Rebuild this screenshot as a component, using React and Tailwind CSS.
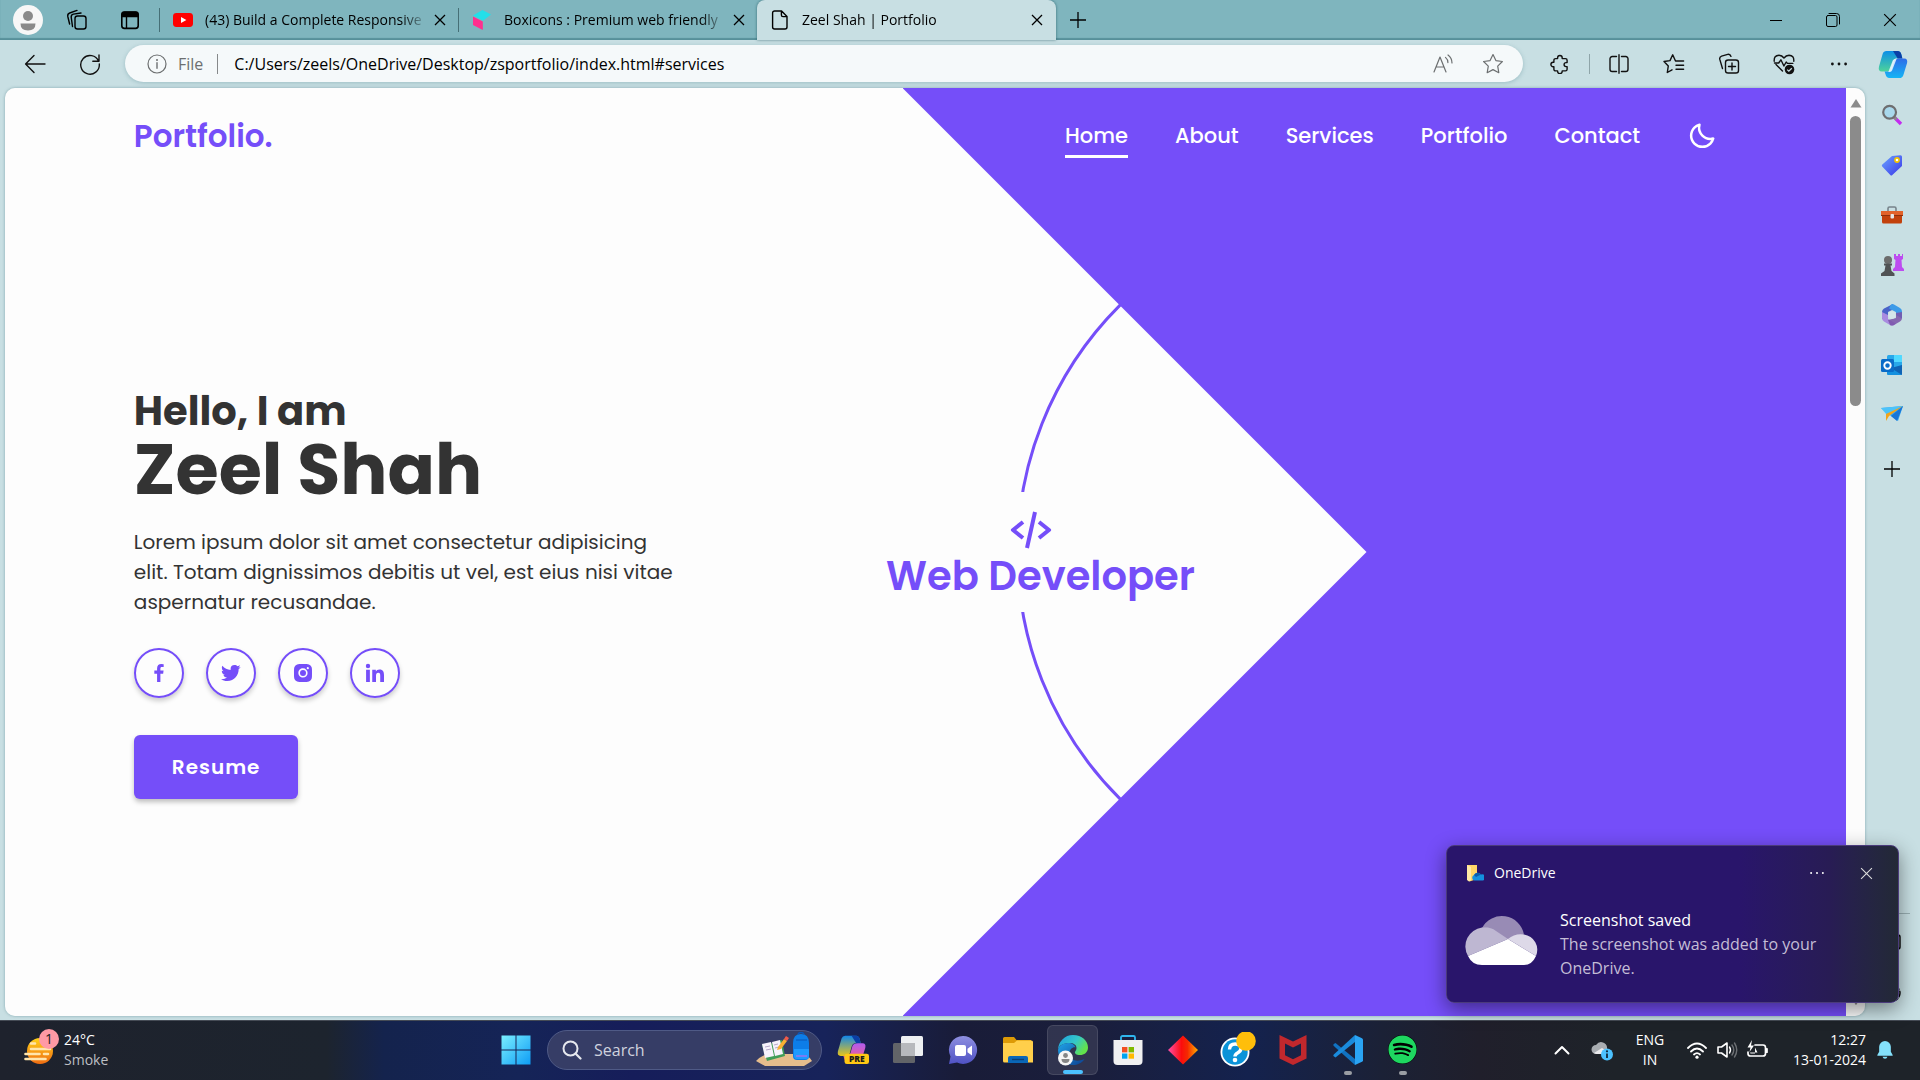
import React from "react";
import {
  BiCodeAlt,
  BiLogoFacebook,
  BiLogoInstagramAlt,
  BiLogoLinkedin,
  BiLogoTwitter,
  BiMoon,
} from "react-icons/bi";
import { FaSpotify } from "react-icons/fa";

const stroke = { fill: "none", stroke: "currentColor", strokeWidth: 1.4, strokeLinecap: "round", strokeLinejoin: "round" };

function Svg({ size = 20, box = "0 0 20 20", children, ...rest }) {
  return (
    <svg width={size} height={size} viewBox={box} aria-hidden="true" className="shrink-0" {...rest}>
      {children}
    </svg>
  );
}

/* ---------- line icons ---------- */

const CloseIcon = ({ size = 12, width = 1.3 }) => (
  <Svg size={size} box="0 0 12 12"><path d="M1 1l10 10M11 1L1 11" stroke="currentColor" strokeWidth={width} fill="none" /></Svg>
);
const PlusIcon = () => (
  <Svg size={18} box="0 0 18 18"><path d="M9 1v16M1 9h16" stroke="currentColor" strokeWidth="1.3" /></Svg>
);
const WorkspacesIcon = () => (
  <Svg size={22} box="0 0 22 22">
    <g {...stroke}>
      <rect x="9" y="7" width="11" height="13" rx="2.5" />
      <path d="M6.5 17.5L5.2 8.2Q5 5.6 7.4 5.1L15 4" />
      <path d="M3.6 15L1.8 7.5Q1.3 4.8 3.7 4L11 1.4" />
    </g>
  </Svg>
);
const TabActionsIcon = () => (
  <Svg size={20}>
    <rect x="1.8" y="2" width="16.4" height="16.4" rx="2.6" {...stroke} strokeWidth="1.6" />
    <path d="M1.5 7.2V4.6A3 3 0 014.5 1.6h11a3 3 0 013 3v2.6z" fill="currentColor" />
    <path d="M6.5 7v11" {...stroke} />
  </Svg>
);
const YoutubeIcon = () => (
  <Svg size={20}><rect y="3" width="20" height="14" rx="3.4" fill="#f00" /><path d="M8 7l5.4 3L8 13z" fill="#fff" /></Svg>
);
const BoxiconsIcon = () => (
  <Svg size={20}>
    <path d="M1 5.4L10.5 0 19 4.6l-8 6.2z" fill="#23dfe9" />
    <path d="M1 6.4l9.8 5V20L1 15z" fill="#ff2f8e" />
  </Svg>
);
const PageIcon = () => (
  <Svg size={20}>
    <path d="M4.6 1h7L17 6.4V17a2 2 0 01-2 2H4.6a2 2 0 01-2-2V3a2 2 0 012-2zM11.4 1.3V5a1.6 1.6 0 001.6 1.6h3.8" {...stroke} />
  </Svg>
);
const BackIcon = () => (
  <Svg size={22} box="0 0 22 22"><path d="M21 11H2M10 2.5L1.6 11l8.4 8.5" {...stroke} /></Svg>
);
const RefreshIcon = () => (
  <Svg size={22} box="0 0 22 22"><path d="M19.6 8.2A9.3 9.3 0 1020.3 11M20 2v6.2h-6.2" {...stroke} /></Svg>
);
const InfoIcon = () => (
  <Svg size={20}><circle cx="10" cy="10" r="9" {...stroke} strokeWidth="1.2" /><path d="M10 8.8v5.4" {...stroke} /><circle cx="10" cy="6" r="1" fill="currentColor" /></Svg>
);
const ReadAloudIcon = () => (
  <Svg size={20}><path d="M1 18L7 3l6 15M3 13h8M12.5 3.4q2.4 2 2.4 5.2M15 1q4 3 4 8" {...stroke} strokeWidth="1.2" /></Svg>
);
const StarIcon = () => (
  <Svg size={22} box="0 0 22 22"><path d="M11 1.6l2.9 6 6.5.9-4.7 4.6 1.1 6.6L11 16.6l-5.8 3.1 1.1-6.6L1.6 8.5l6.5-.9z" {...stroke} strokeWidth="1.2" /></Svg>
);
const PuzzleIcon = () => (
  <Svg size={20}>
    <path d="M5.600 4.600h2V3.800a2.300 2.300 0 014.600 0v.8h3.200a1.700 1.700 0 011.700 1.700v2.300h-1a2 2 0 000 4h1v2.600a1.700 1.700 0 01-1.700 1.700h-3.200v.4a2.300 2.300 0 01-4.600 0v-.4h-2a1.700 1.700 0 01-1.700-1.700v-2.500h-.8a2.200 2.200 0 010-4.400h.8V6.300a1.700 1.700 0 011.700-1.700z" {...stroke} />
  </Svg>
);
const SplitIcon = () => (
  <Svg size={20}><path d="M7.5 2.5H3.2A2.2 2.2 0 001 4.7v10.6a2.2 2.2 0 002.2 2.2h4.3M12.5 2.5h4.3A2.2 2.2 0 0119 4.7v10.6a2.2 2.2 0 01-2.2 2.2h-4.3M10 .8v18.4" {...stroke} /></Svg>
);
const FavoritesIcon = () => (
  <Svg size={22} box="0 0 22 22">
    <path d="M12.5 8L9.7 1.8 7 7.6l-6 .9 4.3 4.4-1 6.6L9 16.8M13 8h7.6M13 12.2h7.6M13 16.2h7.6" {...stroke} />
  </Svg>
);
const CollectionsIcon = () => (
  <Svg size={22} box="0 0 22 22">
    <rect x="7.5" y="7" width="13" height="13" rx="2.6" {...stroke} />
    <path d="M14 10v7M10.5 13.5h7M4.5 15.5L1.8 6.4Q1.2 3.9 3.6 3.1L9.7 1.4q2.4-.6 3.3 2" {...stroke} />
  </Svg>
);
const HeartIcon = () => (
  <Svg size={22} box="0 0 22 22">
    <path d="M9.5 18L3 11.5M1.2 8.2Q.8 2.4 6 2.2 9 2.2 11 5q2-2.8 5-2.8 5.2.2 4.8 6M1.5 10h4.2l2.2-3.2 3 6.2 2.3-4 1.2 1.4h5.4" {...stroke} />
    <circle cx="16.5" cy="16.5" r="4.8" fill="currentColor" />
    <path d="M14.2 16.6l1.6 1.6 3-3" stroke="#c8dfe3" strokeWidth="1.3" fill="none" />
  </Svg>
);
const DotsIcon = ({ size = 18, r = 1.4 }) => (
  <Svg size={size} box="0 0 18 18"><circle cx="2.4" cy="9" r={r} fill="currentColor" /><circle cx="9" cy="9" r={r} fill="currentColor" /><circle cx="15.6" cy="9" r={r} fill="currentColor" /></Svg>
);

/* ---------- colour icons ---------- */

const CopilotShape = ({ a, b, c, d, id }) => (
  <>
    <defs>
      <linearGradient id={`${id}a`} x1="0" y1="0" x2="0" y2="1"><stop offset="0" stopColor={a} /><stop offset="1" stopColor={b} /></linearGradient>
      <linearGradient id={`${id}b`} x1="0" y1="0" x2="0" y2="1"><stop offset="0" stopColor={c} /><stop offset="1" stopColor={d} /></linearGradient>
    </defs>
    <path d="M9 2h12q3 0 4 4l1 4h-6q-3 0-4 4l-2 7q-1 3-4 3H4q-4 0-3-5L5 5q1-3 4-3z" fill={`url(#${id}a)`} />
    <path d="M16 2h5q3 0 4 4l1 4h-5z" fill="#0b3fa6" />
    <path d="M23 10h5q4 0 3 5l-4 13q-1 3-4 3H12q-3 0-4-4l-1-3h4q3 0 4-4l2-7q1-3 6-3z" fill={`url(#${id}b)`} />
  </>
);
const CopilotIcon = () => (
  <Svg size={30} box="0 0 32 32">
    <CopilotShape id="cp" a="#0c8ee8" b="#4ed39a" c="#2f6be8" d="#16b5f5" />
    <path d="M20 10l-5 13q-1 2-4 1.500l4-10.500q1-4 5-4z" fill="#eef8ff" opacity=".85" />
  </Svg>
);
const SearchColorIcon = () => (
  <Svg size={22} box="0 0 22 22">
    <path d="M13 13l7 7" stroke="#c32cf0" strokeWidth="3.4" />
    <path d="M13 13l2.5 2.5" stroke="#8a8a8a" strokeWidth="3" />
    <circle cx="8.6" cy="8.2" r="6.4" fill="#a9d8ec" stroke="#6e6e70" strokeWidth="2.2" />
  </Svg>
);
const TagIcon = () => (
  <Svg size={22} box="0 0 22 22">
    <defs><linearGradient id="tag" x1="0" y1="0" x2="1" y2="1"><stop offset="0" stopColor="#6ba5ff" /><stop offset="1" stopColor="#3a35e8" /></linearGradient></defs>
    <path d="M11 2l8.5-.8q1.5 0 1.5 1.5L21 12 11.3 21q-1 1-2 0L1.2 12.6q-.9-1 .1-2z" fill="url(#tag)" />
    <circle cx="16" cy="6" r="2.1" fill="#fff" stroke="#f5c400" strokeWidth="1.6" />
  </Svg>
);
const ToolboxIcon = () => (
  <Svg size={24} box="0 0 24 24">
    <path d="M8 8V5.5Q8 4 9.500 4h5Q16 4 16 5.500V8" fill="none" stroke="#77838a" strokeWidth="1.6" />
    <path d="M1 8h22v5H1z" fill="#e2622a" /><path d="M2 13h20v6a1.500 1.500 0 01-1.500 1.500h-17A1.500 1.500 0 012 19z" fill="#c2410c" />
    <path d="M1 12.500h22" stroke="#8f2f0a" strokeWidth="1" /><rect x="10.500" y="11" width="3.500" height="4.500" rx="1" fill="#e6e6e6" />
  </Svg>
);
const ChessIcon = () => (
  <Svg size={24} box="0 0 24 24">
    <path d="M14 1h2v2h2V1h2v2h2V1h1v5l-1.500 1 .5 7 2 2v2H13v-2l2-2 .5-7L14 6z" fill="#bd4cf0" />
    <circle cx="8" cy="7" r="4" fill="#6c6c6c" /><path d="M4 10.500h8v2h-1.500l1 5.500 3 2.500V23H1v-2.500L4.500 18l1-5.500H4z" fill="#505254" />
  </Svg>
);
const M365Icon = () => (
  <Svg size={22} box="0 0 22 22">
    <path d="M12 0L3 4.500Q1 5.500 1 8v7l6-3V8l6-3z" fill="#4a63c8" />
    <path d="M10 .5q1.500-.8 3 0l6 3.500q2 1 2 3.500v7l-6-3.500V8L8 4.500z" fill="#3d9be8" />
    <path d="M1 8v6q0 2.500 2 3.500l6 3.500q2 1 4 0l2-1.200-8-4.800V11z" fill="#a98be0" />
    <path d="M21 8v6q0 2.500-2 3.500L13 21q-2 1-4 0l-2-5 8-2V9z" fill="#7a52a8" opacity=".85" />
    <circle cx="11" cy="11" r="3.800" fill="#d5e5ea" />
  </Svg>
);
const OutlookIcon = () => (
  <Svg size={22} box="0 0 22 22">
    <rect x="6" y="1" width="15" height="19" rx="1.500" fill="#28a8ea" /><path d="M13 1h7a1 1 0 011 1v6h-8z" fill="#50d9ff" />
    <path d="M6 12l8 4 7-5v9a1 1 0 01-1 1H7a1 1 0 01-1-1z" fill="#1490df" /><path d="M21 11v10L10 14z" fill="#0f63b5" />
    <rect x="0" y="5" width="13" height="13" rx="1.500" fill="#0a6cc8" /><circle cx="6.500" cy="11.500" r="3.200" fill="none" stroke="#fff" strokeWidth="1.900" />
  </Svg>
);
const SendIcon = () => (
  <Svg size={22} box="0 0 22 22">
    <path d="M0 4l22-2-5 15-7-5z" fill="#35a8f3" /><path d="M0 4l22-2L6 11z" fill="#4cc3fa" />
    <path d="M22 2L5 10v7l3-5z" fill="#f3a41a" /><path d="M10 12l12-10-6 15z" fill="#1976d8" />
  </Svg>
);
const WindowsIcon = () => (
  <Svg size={30} box="0 0 30 30">
    <defs><linearGradient id="win" gradientUnits="userSpaceOnUse" x1="0" y1="0" x2="30" y2="30"><stop offset="0" stopColor="#7cf0ff" /><stop offset="1" stopColor="#0c9bf5" /></linearGradient></defs>
    <path d="M.5.500h14v14H.5zM15.500.500h14v14h-14zM.5 15.500h14v14H.5zM15.500 15.500h14v14h-14z" fill="url(#win)" />
  </Svg>
);
const CopilotPreIcon = () => (
  <Svg size={32} box="0 0 34 34">
    <g transform="scale(.97)"><CopilotShape id="pre" a="#1286e8" b="#e8c51a" c="#b05cf0" d="#ff5f7e" /></g>
    <rect x="8" y="21" width="26" height="11" rx="2.500" fill="#ffc814" />
    <text x="21" y="29.700" textAnchor="middle" fontSize="9" fontWeight="800" fontFamily="Open Sans, sans-serif" fill="#1b1b1b">PRE</text>
  </Svg>
);
const TaskViewIcon = () => (
  <Svg size={30} box="0 0 30 30">
    <rect x="0" y="8" width="22" height="20" rx="1.500" fill="#626468" /><rect x="8" y="1" width="22" height="20" rx="1.500" fill="#eef0f2" /><path d="M8 8h14v13H8z" fill="#b7b9bd" />
  </Svg>
);
const ChatIcon = () => (
  <Svg size={30} box="0 0 30 30">
    <defs><linearGradient id="chat" x1="0" y1="0" x2="0" y2="1"><stop offset="0" stopColor="#8e8fe0" /><stop offset="1" stopColor="#4f52c4" /></linearGradient></defs>
    <path d="M15 1a14 14 0 11-6 26.600L1 29l1.500-7.500A14 14 0 0115 1z" fill="url(#chat)" />
    <rect x="7" y="10" width="11" height="11" rx="2" fill="#fff" /><path d="M19.500 13.800L24 10.500v10l-4.500-3.300z" fill="#fff" />
  </Svg>
);
const FolderIcon = () => (
  <Svg size={30} box="0 0 30 30">
    <path d="M0 3.500A1.500 1.500 0 011.500 2H11l2.500 3H28v6H0z" fill="#dd9a06" />
    <path d="M0 8h11l3-2.500h14.500A1.500 1.500 0 0130 7v20.500H1.500A1.500 1.500 0 010 26z" fill="#ffcf4b" />
    <path d="M5 28v-5a2 2 0 012-2h16a2 2 0 012 2v5z" fill="#0a67b8" /><path d="M9 24.500h12" stroke="#0c3f73" strokeWidth="1.400" />
  </Svg>
);
const EdgeIcon = () => (
  <Svg size={32} box="0 0 32 32">
    <defs>
      <linearGradient id="edA" x1="0" y1="0" x2="1" y2=".5"><stop offset="0" stopColor="#1c9de0" /><stop offset=".6" stopColor="#35c8c8" /><stop offset="1" stopColor="#63e24b" /></linearGradient>
      <linearGradient id="edB" x1="0" y1="0" x2="1" y2="1"><stop offset="0" stopColor="#1fa3e8" /><stop offset="1" stopColor="#0d3f8f" /></linearGradient>
    </defs>
    <path d="M1 16A15 15 0 0116 1c9 0 15 6 15 12.500 0 5-4 7.500-8 7.500-4 0-5.500-1.500-5-3 .6-1.600 1.500-2 1.500-4C19.500 11 17 9 12 9 7 9 2 11 1 16z" fill="url(#edA)" />
    <path d="M1 16c1-4 5-7 10-7 4 0 7 2 7.500 4.500-2.500-.7-6 1.500-6 6 0 6 6.500 9.500 15 5.500C25 29 20.500 31 16 31 8 31 1 24 1 16z" fill="url(#edB)" />
    <circle cx="8.500" cy="24" r="7.500" fill="#f5f5f5" /><circle cx="8.500" cy="21.500" r="2.400" fill="#858585" /><path d="M4.500 25h8q0 4-4 4t-4-4z" fill="#858585" />
  </Svg>
);
const StoreIcon = () => (
  <Svg size={30} box="0 0 30 30">
    <path d="M8 7V2.500A1.500 1.500 0 019.500 1h11A1.500 1.500 0 0122 2.500V7" fill="none" stroke="#2fb6ef" strokeWidth="1.800" />
    <path d="M.5 5h29v21a4 4 0 01-4 4h-21a4 4 0 01-4-4z" fill="#f0f0f1" />
    <path d="M9 12h5.400v5.400H9z" fill="#f25022" /><path d="M15.600 12H21v5.400h-5.400z" fill="#7fba00" /><path d="M9 18.500h5.400v5.200H9z" fill="#00a4ef" /><path d="M15.600 18.500H21v5.200h-5.400z" fill="#ffb900" />
  </Svg>
);
const DiamondIcon = () => (
  <Svg size={30} box="0 0 30 30">
    <defs><linearGradient id="dia"><stop offset="0" stopColor="#ff4fa8" /><stop offset=".45" stopColor="#fb0d0d" /><stop offset=".65" stopColor="#f52a00" /><stop offset="1" stopColor="#ffae00" /></linearGradient></defs>
    <path d="M15 .5L30 15 15 29.500 0 15z" fill="url(#dia)" />
  </Svg>
);
const HelpIcon = () => (
  <Svg size={36} box="0 0 36 36">
    <circle cx="15" cy="20" r="14.500" fill="#fff" /><circle cx="15" cy="20" r="12.700" fill="#0c93d8" />
    <path d="M9.500 17.500q0-5.500 5.700-5.500t5.700 4.600q0 2.800-3.400 4.500-2.500 1.300-2.500 3.400" fill="none" stroke="#fff" strokeWidth="3.400" />
    <circle cx="15" cy="28" r="2.300" fill="#fff" /><circle cx="26" cy="9" r="9.800" fill="#ffbe0a" />
  </Svg>
);
const ShieldIcon = () => (
  <Svg size={30} box="0 0 30 30">
    <path d="M1.500 0L15 6.500 28.500 0v23.500L15 30 1.500 23.500zM7 8.500v11.700l8 4 8-4V8.500l-8 4z" fill="#c1282d" fillRule="evenodd" />
  </Svg>
);
const CodeEditorIcon = () => (
  <Svg size={30} box="0 0 30 30">
    <path d="M2.500 8L22 24v6L.8 11q-.9-1 0-2z" fill="#1173c2" />
    <path d="M2.500 22.500L22 7V0L.8 19.500q-.9 1 0 1.700z" fill="#1a8bdc" />
    <path d="M22 0l7 3.200q1 .5 1 1.600v20.400q0 1.100-1 1.600L22 30z" fill="#2aa4f4" />
  </Svg>
);
const BackpackArt = () => (
  <svg width="58" height="36" viewBox="0 0 58 36" aria-hidden="true" className="shrink-0">
    <path d="M1 29q7-7 14-7h30q8 0 12 7l-8 5H10z" fill="#e6bd8c" />
    <path d="M7 13l11-2 5-2 4-1 3 16-18 5z" fill="#3f9d57" /><path d="M7 12l9-2 3 14-9 2zM17 10l8-2 3 14-8 2z" fill="#f6f2fb" />
    <path d="M10 15l5-1M11 18l5-1M19 13l4-1M20 16l4-1" stroke="#b7a9c9" /><path d="M23 15l6-8 3 2-6 8-4 1z" fill="#f8b133" /><path d="M29 7l2-3 3 2-2 3z" fill="#f05a4a" />
    <path d="M38 11q0-9 8-9t8 9v13q0 4-4 4h-8q-4 0-4-4z" fill="#0d7de8" /><path d="M39 17h15v7q0 3-3 3h-9q-3 0-3-3z" fill="#1e9aff" /><path d="M41 23h11v2H41z" fill="#7a7cf4" /><path d="M43 2q3-3 6 0" stroke="#0b57b8" strokeWidth="1.500" fill="none" /><path d="M41 8h11" stroke="#0b57b8" />
  </svg>
);
const WeatherIcon = () => (
  <Svg size={30} box="0 0 30 30">
    <defs><linearGradient id="sun" x1="0" y1="0" x2="0" y2="1"><stop offset="0" stopColor="#ffd21a" /><stop offset="1" stopColor="#ef6c12" /></linearGradient></defs>
    <circle cx="16" cy="16" r="13" fill="url(#sun)" />
    <path d="M7 8.500h4M7 14h19M1.500 19h14M20 19h4M1.500 24h20" stroke="#ffe5ad" strokeWidth="2.600" strokeLinecap="round" />
  </Svg>
);
const OneDriveFolder = () => (
  <Svg size={18} box="0 0 18 18">
    <path d="M1 1h10v14L3.500 17.500 1 15z" fill="#ffd667" /><path d="M1 1l4 2v13l-2 1.500L1 16z" fill="#ffe9a6" />
    <path d="M8 16.500a3 3 0 010-5.500 4 4 0 017-.5 3 3 0 012 6z" fill="#1490df" /><path d="M8 11a4 4 0 017-.5l-5 2.500z" fill="#0a5cad" />
  </Svg>
);
const CloudArt = () => (
  <svg width="76" height="50" viewBox="0 0 76 50" aria-hidden="true" className="shrink-0">
    <path d="M19 12A22.500 22.500 0 0161 18.500L45 24 33 17Q27 11 19 12z" fill="#988bb5" />
    <path d="M5 40A19 19 0 0119 11.500Q27 10.500 33 15l12 8z" fill="#beb7d2" />
    <path d="M45 23Q52 17 61 18.500A15.500 15.500 0 0173 40z" fill="#ddd9e8" />
    <path d="M5 40L45 23l28 17Q69 49 61 49H19Q9 49 5 40z" fill="#fff" />
  </svg>
);

/* ---------- data ---------- */

const navLinks = ["Home", "About", "Services", "Portfolio", "Contact"];
const socials = [
  ["Facebook", BiLogoFacebook],
  ["Twitter", BiLogoTwitter],
  ["Instagram", BiLogoInstagramAlt],
  ["LinkedIn", BiLogoLinkedin],
];
const toolbarActions = [
  ["Split screen", SplitIcon],
  ["Favorites", FavoritesIcon],
  ["Collections", CollectionsIcon],
  ["Browser essentials", HeartIcon],
  ["Settings and more", DotsIcon],
];
const sidebarApps = [
  ["Search", SearchColorIcon],
  ["Shopping", TagIcon],
  ["Tools", ToolboxIcon],
  ["Games", ChessIcon],
  ["Microsoft 365", M365Icon],
  ["Outlook", OutlookIcon],
  ["Drop", SendIcon],
];
const taskbarApps = [
  ["Copilot", CopilotPreIcon],
  ["Task View", TaskViewIcon],
  ["Chat", ChatIcon],
  ["File Explorer", FolderIcon],
  ["Edge", EdgeIcon, "active"],
  ["Store", StoreIcon],
  ["Diamond", DiamondIcon],
  ["Help", HelpIcon],
  ["McAfee", ShieldIcon],
  ["Visual Studio Code", CodeEditorIcon, "open"],
  ["Spotify", null, "open"],
];

/* ---------- browser chrome ---------- */

function Tab({ icon, title, active }) {
  return (
    <div className={`flex h-10 w-[299px] items-center pr-[7px] pl-[13px] ${active ? "rounded-t-lg bg-[#c8dfe3] shadow-[0_0_3px_rgba(0,60,70,0.6)]" : ""}`}>
      {icon}
      <span className="ml-3 flex-1 overflow-hidden text-sm whitespace-nowrap [mask-image:linear-gradient(to_right,black_88%,transparent)]">{title}</span>
      <button aria-label={`Close ${title}`} className="flex size-6 items-center justify-center"><CloseIcon /></button>
    </div>
  );
}

function TabStrip() {
  return (
    <div className="flex h-10 items-center bg-[#7fb5be] pr-0.5 pl-[13px] shadow-[inset_0_-2px_1px_rgba(40,100,110,0.45)]">
      <button aria-label="Profile" className="size-[30px] rounded-full bg-[#f7f7f7]">
        <Svg size={30} box="0 0 30 30"><circle cx="15" cy="11" r="5" fill="#8a8a8a" /><path d="M7.500 18.500h15q0 7-7.500 7t-7.500-7z" fill="#8a8a8a" /></Svg>
      </button>
      <button aria-label="Workspaces" className="ml-[7px] flex w-[54px] justify-center"><WorkspacesIcon /></button>
      <button aria-label="Tab actions" className="flex w-[52px] justify-center"><TabActionsIcon /></button>
      <span className="ml-[3px] h-6 w-px bg-[#466f76]" />
      <Tab icon={<YoutubeIcon />} title="(43) Build a Complete Responsive" />
      <span className="-ml-px h-6 w-px bg-[#466f76]" />
      <Tab icon={<BoxiconsIcon />} title="Boxicons : Premium web friendly" />
      <div className="relative z-10 -ml-px self-stretch"><Tab active icon={<PageIcon />} title="Zeel Shah | Portfolio" /></div>
      <button aria-label="New tab" className="ml-2.5 flex size-6 items-center justify-center"><PlusIcon /></button>
      <div className="ml-auto flex">
        <button aria-label="Minimize" className="flex w-[57px] items-center justify-center"><span className="h-px w-3 bg-black" /></button>
        <button aria-label="Restore" className="flex w-[57px] items-center justify-center">
          <Svg size={14} box="0 0 14 14"><rect x=".5" y="2.500" width="10.500" height="11" rx="1.500" {...stroke} strokeWidth="1" /><path d="M3 .5h7.500a3 3 0 013 3V11" {...stroke} strokeWidth="1" /></Svg>
        </button>
        <button aria-label="Close window" className="flex w-[57px] items-center justify-center"><CloseIcon size={14} width={1} /></button>
      </div>
    </div>
  );
}

function Toolbar() {
  return (
    <div className="flex h-12 items-center bg-[#c8dfe3] pb-px pl-[7px] text-[#111]">
      <button aria-label="Back" className="flex w-[55px] justify-center"><BackIcon /></button>
      <button aria-label="Refresh" className="flex w-[55px] justify-center"><RefreshIcon /></button>
      <div className="ml-2 flex h-[37px] flex-1 items-center rounded-full bg-[#f5f9fa] pr-[5px] pl-[22px] text-[#6c6f70] shadow-[0_1px_4px_rgba(90,140,150,0.4)]">
        <InfoIcon />
        <label htmlFor="address" className="ml-[11px] text-base">File</label>
        <span className="ml-3.5 h-5 w-px bg-[#86898a]" />
        <input id="address" defaultValue="C:/Users/zeels/OneDrive/Desktop/zsportfolio/index.html#services" className="ml-4 min-w-0 flex-1 bg-transparent text-base text-black outline-none" />
        <button aria-label="Read aloud" className="flex w-[50px] justify-center"><ReadAloudIcon /></button>
        <button aria-label="Add to favorites" className="flex w-[50px] justify-center"><StarIcon /></button>
      </div>
      <button aria-label="Extensions" className="ml-[9px] flex w-14 justify-center"><PuzzleIcon /></button>
      <span className="mx-px h-5 w-px bg-[#8fa5a9]" />
      {toolbarActions.map(([name, Icon]) => (
        <button key={name} aria-label={name} className="flex w-[55px] justify-center"><Icon /></button>
      ))}
      <button aria-label="Copilot" className="flex w-[54px] justify-center"><CopilotIcon /></button>
    </div>
  );
}

function Sidebar() {
  return (
    <aside className="flex w-[55px] shrink-0 flex-col items-center pt-0.5 pr-0.5">
      {sidebarApps.map(([name, Icon]) => (
        <button key={name} aria-label={name} className="flex h-[50px] w-full items-center justify-center"><Icon /></button>
      ))}
      <button aria-label="Customize sidebar" className="mt-1 flex h-[50px] w-full items-center justify-center"><PlusIcon /></button>
      <div className="mt-auto flex w-9 flex-col items-center border-t border-[#98aeb2]">
        <button aria-label="Side panel" className="flex h-14 items-center"><Svg><rect x="2" y="3" width="16" height="14" rx="2" {...stroke} /></Svg></button>
        <button aria-label="Sidebar settings" className="flex h-[46px] items-center"><Svg><circle cx="10" cy="10" r="3" {...stroke} /><circle cx="10" cy="10" r="8" {...stroke} strokeDasharray="4 2" /></Svg></button>
      </div>
    </aside>
  );
}

function Scrollbar() {
  return (
    <div className="flex w-[19px] shrink-0 flex-col items-center bg-[#fcfcfc] py-2.5">
      <Svg size={12} box="0 0 12 12"><path d="M6 1l5.500 8.500H.5z" fill="#8b8b8b" /></Svg>
      <span className="mt-1.5 h-[290px] w-[11px] rounded-full bg-[#8b8b8b]" />
      <span className="flex-1" />
      <Svg size={10} box="0 0 12 12"><path d="M6 11L.5 2.500h11z" fill="#8b8b8b" /></Svg>
    </div>
  );
}

/* ---------- portfolio page ---------- */

function Portfolio() {
  return (
    <main className="relative flex flex-1 flex-col overflow-hidden bg-[#fdfdfd] font-[Poppins,Inter,sans-serif] text-[#333]">
      <div className="absolute inset-y-0 right-0 left-[calc(50%-23px)]">
        <div className="absolute top-1/2 left-[113px] size-[700px] -translate-y-1/2 rounded-full border-3 border-[#754ef9]" />
        <div className="absolute top-1/2 -left-[17px] flex h-[120px] w-[310px] -translate-y-1/2 flex-col items-center justify-center bg-[#fdfdfd] text-[#754ef9]">
          <BiCodeAlt size={48} className="mr-5" />
          <h3 className="text-[40px] leading-[44px] font-semibold whitespace-nowrap">Web Developer</h3>
        </div>
        <div className="absolute inset-0 bg-[#754ef9] [clip-path:polygon(0_0,100%_0,100%_100%,0_100%,464px_50%)]" />
      </div>

      <header className="relative z-10 flex h-24 items-center px-[7%]">
        <a href="#home" className="text-[31px] font-semibold text-[#754ef9]">Portfolio.</a>
        <nav className="ml-auto flex items-center gap-[47px] text-[21px] font-medium text-white">
          {navLinks.map((link, i) => (
            <a key={link} href={`#${link.toLowerCase()}`} className={i === 0 ? "border-y-3 border-transparent border-b-white py-[3px]" : ""}>{link}</a>
          ))}
          <button aria-label="Toggle dark mode"><BiMoon size={30} /></button>
        </nav>
      </header>

      <section className="relative flex flex-1 flex-col items-start justify-center px-[7%] pb-3.5">
        <h3 className="text-[40px] leading-[48px] font-bold">Hello, I am</h3>
        <h1 className="text-[70px] leading-[70px] font-bold">Zeel Shah</h1>
        <p className="mt-[22px] w-[550px] text-xl leading-[30px]">
          Lorem ipsum dolor sit amet consectetur adipisicing elit. Totam dignissimos debitis ut vel, est eius nisi vitae aspernatur recusandae.
        </p>
        <div className="mt-[31px] flex gap-[22px]">
          {socials.map(([name, Icon]) => (
            <a key={name} href={`#${name.toLowerCase()}`} aria-label={name} className="flex size-[50px] items-center justify-center rounded-full border-2 border-[#754ef9] text-[#754ef9] shadow-[0_3px_5px_rgba(0,0,0,0.2)]">
              <Icon size={24} />
            </a>
          ))}
        </div>
        <button className="mt-[37px] h-16 rounded-md bg-[#754ef9] px-[38px] text-xl font-semibold tracking-wider text-white shadow-[0_3px_5px_rgba(0,0,0,0.25)]">Resume</button>
      </section>
    </main>
  );
}

/* ---------- desktop ---------- */

function Notification() {
  return (
    <div role="status" className="absolute right-[21px] bottom-[77px] z-20 h-[158px] w-[453px] rounded-lg border border-[#4b3b7c] bg-linear-to-r from-[#29156b] from-65% via-[#281c54] via-85% to-[#232936] px-4 pt-[13px] text-white shadow-[0_6px_20px_rgba(0,0,0,0.45)]">
      <div className="flex h-7 items-center text-sm">
        <div className="ml-[3px] flex flex-1 items-center gap-2.5"><OneDriveFolder />OneDrive</div>
        <button aria-label="Notification options" className="flex w-[50px] justify-center"><DotsIcon size={16} r={1.1} /></button>
        <button aria-label="Dismiss" className="ml-2 flex w-8 justify-center text-[#dcdcdc]"><CloseIcon size={13} width={1} /></button>
      </div>
      <div className="mt-[21px] flex gap-[21px]">
        <div className="pt-2"><CloudArt /></div>
        <div className="text-base leading-6">
          <p>Screenshot saved</p>
          <p className="w-[280px] text-[#c4bdd6]">The screenshot was added to your OneDrive.</p>
        </div>
      </div>
    </div>
  );
}

function Taskbar() {
  return (
    <footer className="grid h-15 shrink-0 grid-cols-[1fr_auto_1fr] items-center border-t border-[#454b55] bg-[linear-gradient(to_right,#1e222d_0%,#1d242e_17%,#14234d_20%,#152457_27%,#161d5a_33%,#17235a_43%,#191c38_50%,#1a1e3c_57%,#14224e_65%,#1b2136_72%,#201f2b_77%,#1e2329_84%)] pb-0.5 text-sm text-white">
      <div className="flex items-center pl-6">
        <div className="relative">
          <WeatherIcon />
          <span className="absolute -top-1.5 left-[15px] flex size-5 items-center justify-center rounded-full bg-[#ff9aa5] text-[#222]">1</span>
        </div>
        <div className="ml-2.5 leading-5"><p>24°C</p><p className="text-[#bcbfc4]">Smoke</p></div>
      </div>

      <div className="flex items-center pr-[5px]">
        <button aria-label="Start" className="flex w-[62px] justify-center"><WindowsIcon /></button>
        <div className="flex h-10 w-[275px] items-center rounded-full border border-[#4f5a86] bg-[#363d66] pr-2 pl-3.5">
          <Svg><circle cx="8.500" cy="8.500" r="7" fill="none" stroke="#e6e8ee" strokeWidth="2" /><path d="M13.500 13.500l5 5" stroke="#e6e8ee" strokeWidth="2.200" strokeLinecap="round" /></Svg>
          <input aria-label="Search" placeholder="Search" className="ml-3 min-w-0 flex-1 bg-transparent text-base placeholder-[#cfd2de] outline-none" />
          <BackpackArt />
        </div>
        <div className="ml-[3px] flex">
          {taskbarApps.map(([name, Icon, state]) => (
            <button key={name} aria-label={name} className={`relative mx-[2px] flex h-[50px] w-[51px] items-center justify-center rounded-md ${state === "active" ? "border border-white/10 bg-white/10" : ""}`}>
              {Icon ? <Icon /> : <span className="rounded-full bg-black"><FaSpotify size={29} color="#1ed760" /></span>}
              {state === "active" && <span className="absolute bottom-0 h-1 w-5 rounded-full bg-[#4cc2ff]" />}
              {state === "open" && <span className="absolute bottom-0 h-1 w-2 rounded-full bg-[#9a9da3]" />}
            </button>
          ))}
        </div>
      </div>

      <div className="flex items-center justify-end pr-[26px]">
        <button aria-label="Show hidden icons" className="flex w-10 justify-center"><Svg size={16} box="0 0 16 16"><path d="M1.500 11.500L8 5l6.500 6.500" {...stroke} strokeWidth="2" /></Svg></button>
        <button aria-label="OneDrive" className="flex w-10 justify-center">
          <Svg size={22} box="0 0 22 22"><path d="M5 15a4.500 4.500 0 010-9Q8 2 12 3.500q3.500 1 4 4.500v7z" fill="#a9adb2" /><path d="M3 14l8-5 6 4v2H5z" fill="#e9eaec" /><circle cx="16" cy="15.500" r="6" fill="#4cc2ff" /><path d="M16 14.500V19" stroke="#10283a" strokeWidth="1.800" /><circle cx="16" cy="12.300" r="1.100" fill="#10283a" /></Svg>
        </button>
        <button className="w-14 leading-5">ENG<br />IN</button>
        <button aria-label="Network, volume and battery" className="ml-2 flex items-center gap-2">
          <Svg size={22} box="0 0 22 22"><g {...stroke} strokeWidth="1.800"><path d="M2 9q9-9 18 0M5 12.500q6-6 12 0M8 15.500q3-2.800 6 0" /></g><circle cx="11" cy="18.200" r="1.600" fill="#fff" /></Svg>
          <Svg size={22} box="0 0 22 22"><path d="M2 8h3.500L11 4v14l-5.500-4H2z" {...stroke} strokeWidth="1.600" /><path d="M13.500 8q2 3 0 6" {...stroke} /><path d="M16 6q3.500 5 0 10M18.500 4q4.500 7 0 14" {...stroke} opacity=".35" /></Svg>
          <Svg size={22} box="0 0 22 22"><path d="M9 6h8a2.500 2.500 0 012.500 2.500v6A2.500 2.500 0 0117 17H4.500A2.500 2.500 0 012 14.500V13M21 9.800v3.400" {...stroke} strokeWidth="1.700" /><path d="M4 13.500h7.500L9 8.500v6H4.500zM6 1L1.500 8.500h3L3.500 13 8 6.500H5z" fill="#fff" /></Svg>
        </button>
        <button className="ml-3 w-[86px] text-right leading-5">12:27<br />13-01-2024</button>
        <button aria-label="Notifications" className="ml-2.5">
          <Svg size={18} box="0 0 18 20"><path d="M9 0a6.500 6.500 0 016.500 6.500V12l2 3.500v.8H.5v-.8l2-3.500V6.500A6.500 6.500 0 019 0zM6.300 17.500h5.400q-.5 2.300-2.700 2.300t-2.700-2.300z" fill="#84e1fb" /></Svg>
        </button>
      </div>
    </footer>
  );
}

export default function App() {
  return (
    <div className="relative flex min-h-screen flex-col bg-[#c8dfe3] font-['Open_Sans',sans-serif] text-black">
      <TabStrip />
      <Toolbar />
      <div className="flex flex-1 pb-1 pl-[5px]">
        <div className="flex min-w-0 flex-1 overflow-hidden rounded-[10px] shadow-[0_0_3px_rgba(60,110,120,0.5)]">
          <Portfolio />
          <Scrollbar />
        </div>
        <Sidebar />
      </div>
      <Taskbar />
      <Notification />
    </div>
  );
}
